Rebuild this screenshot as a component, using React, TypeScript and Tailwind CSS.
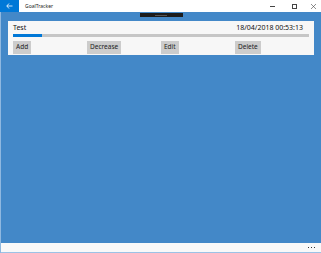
export default function App() {
  return (
    <div className="w-[321px] h-[253px] flex flex-col bg-[#4388c8] overflow-hidden" style={{ fontFamily: '"Noto Sans", "Open Sans", sans-serif' }}>
      {/* Title bar */}
      <div className="h-[12px] flex items-center bg-white shrink-0">
        <div className="w-[19px] h-full bg-[#0078d7] flex items-center justify-center">
          <svg width="7" height="6" viewBox="0 0 7 6" fill="none" stroke="white" strokeWidth="0.8">
            <path d="M3 0.5 L0.8 3 L3 5.5 M0.8 3 H6.5" />
          </svg>
        </div>
        <span className="ml-[6px] text-[5px] text-[#222] leading-none">GoalTracker</span>
        <div className="ml-auto flex items-center h-full text-[#333]">
          <div className="w-[22px] flex justify-center">
            <div className="w-[5px] h-[0.6px] bg-[#444]" />
          </div>
          <div className="w-[22px] flex justify-center">
            <div className="w-[5px] h-[5px] border-[0.6px] border-[#444]" />
          </div>
          <div className="w-[16px] flex justify-center">
            <svg width="5" height="5" viewBox="0 0 5 5" stroke="#444" strokeWidth="0.6">
              <path d="M0 0 L5 5 M5 0 L0 5" />
            </svg>
          </div>
        </div>
      </div>

      {/* Content */}
      <div className="flex-1 flex flex-col border-l border-[#8fb8e0]">
        <div className="h-[9px] flex justify-center items-start pt-[1px]">
          <div className="w-[43px] h-[4px] bg-[#1c1c1c] flex items-center justify-center">
            <div className="w-[12px] h-[1px] bg-[#555]" />
          </div>
        </div>
        <div className="mx-[7px] bg-[#f7f7f7] px-[5px] pt-[2px] pb-[1px] text-[#111]">
          <div className="flex justify-between text-[7px] leading-[9px] pr-[6px]">
            <span>Test</span>
            <span>18/04/2018 00:53:13</span>
          </div>
          <div className="mt-[2px] h-[3px] bg-[#c6c6c6]">
            <div className="h-full w-[29px] bg-[#0078d7]" />
          </div>
          <div className="mt-[4px] grid grid-cols-4 w-[296px] text-[6.5px] text-[#222]">
            <div><button className="h-[13px] px-[3px] bg-[#cccccc] leading-none">Add</button></div>
            <div><button className="h-[13px] px-[3px] bg-[#cccccc] leading-none">Decrease</button></div>
            <div><button className="h-[13px] px-[3px] bg-[#cccccc] leading-none">Edit</button></div>
            <div><button className="h-[13px] px-[3px] bg-[#cccccc] leading-none">Delete</button></div>
          </div>
        </div>
        <div className="flex-1" />
        <div className="h-[9px] bg-[#f9f9f9] flex items-center justify-end pr-[6px] gap-[1.5px]">
          <div className="w-[1.5px] h-[1.5px] bg-[#333]" />
          <div className="w-[1.5px] h-[1.5px] bg-[#333]" />
          <div className="w-[1.5px] h-[1.5px] bg-[#333]" />
        </div>
        <div className="h-[1px] bg-[#9cc2e6]" />
      </div>
    </div>
  );
}
